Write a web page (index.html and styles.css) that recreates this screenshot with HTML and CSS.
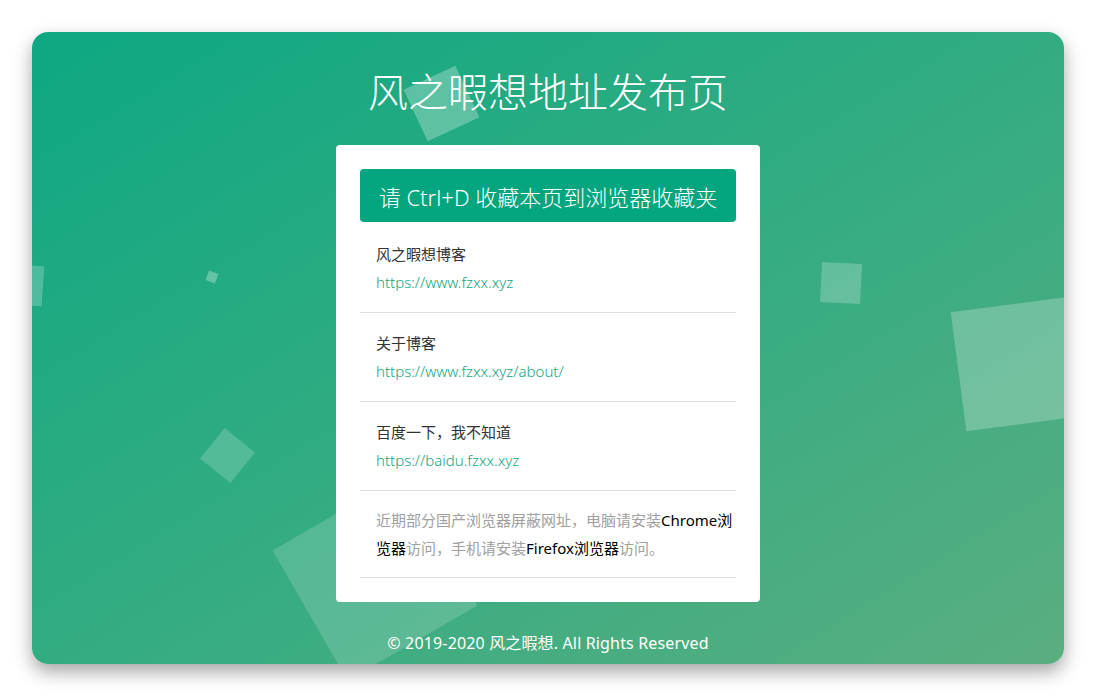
FILE: index.html
```html
<!DOCTYPE html>
<html lang="zh-CN">
<head>
<meta charset="utf-8">
<title>风之暇想地址发布页</title>
<link rel="stylesheet" href="styles.css">
</head>
<body>
<div class="panel">
  <div class="bubbles">
    <span class="sq sq-title"></span>
    <span class="sq sq-tiny"></span>
    <span class="sq sq-edge"></span>
    <span class="sq sq-mid"></span>
    <span class="sq sq-right"></span>
    <span class="sq sq-diamond"></span>
    <span class="sq sq-bottom"></span>
  </div>
  <div class="content">
    <h1 class="title">风之暇想地址发布页</h1>
    <div class="card">
      <div class="tip">请 Ctrl+D 收藏本页到浏览器收藏夹</div>
      <ul class="list">
        <li class="item">
          <div class="name">风之暇想博客</div>
          <a class="url" href="#">https://www.fzxx.xyz</a>
        </li>
        <li class="item">
          <div class="name">关于博客</div>
          <a class="url" href="#">https://www.fzxx.xyz/about/</a>
        </li>
        <li class="item">
          <div class="name">百度一下，我不知道</div>
          <a class="url" href="#">https://baidu.fzxx.xyz</a>
        </li>
        <li class="item note">
          <span class="line">近期部分国产浏览器屏蔽网址，电脑请安装<b>Chrome浏</b></span>
          <span class="line"><b>览器</b>访问，手机请安装<b>Firefox浏览器</b>访问。</span>
        </li>
      </ul>
    </div>
    <footer class="footer">© 2019-2020 风之暇想. All Rights Reserved</footer>
  </div>
</div>
</body>
</html>
```

FILE: styles.css
```css
html, body {
  margin: 0;
  padding: 0;
  background: #ffffff;
}

body {
  padding: 32px;
  font-family: "Noto Sans", "Noto Sans CJK SC", sans-serif;
}

.panel {
  position: relative;
  height: 632px;
  border-radius: 16px;
  overflow: hidden;
  background: linear-gradient(to bottom right, #0da882 0%, #33ac82 50%, #5aae80 100%);
  box-shadow: 0 8px 18px rgba(0, 0, 0, 0.35);
}

.bubbles {
  position: absolute;
  inset: 0;
  overflow: hidden;
}

.sq {
  position: absolute;
  display: block;
  background: rgba(255, 255, 255, 0.22);
}

.sq-title {
  left: 381px; top: 43px; width: 57px; height: 57px;
  transform: rotate(-25deg);
  background: rgba(255, 255, 255, 0.28);
}
.sq-tiny {
  left: 175px; top: 240px; width: 10px; height: 10px;
  transform: rotate(20deg);
  background: rgba(255, 255, 255, 0.3);
}
.sq-edge {
  left: -29px; top: 233px; width: 40px; height: 40px;
  transform: rotate(4deg);
}
.sq-mid {
  left: 789px; top: 231px; width: 40px; height: 40px;
  transform: rotate(3deg);
}
.sq-right {
  left: 926px; top: 272px; width: 120px; height: 120px;
  transform: rotate(-7.5deg);
  background: rgba(255, 255, 255, 0.24);
}
.sq-diamond {
  left: 176px; top: 404px; width: 39px; height: 39px;
  transform: rotate(39deg);
  background: rgba(255, 255, 255, 0.18);
}
.sq-bottom {
  left: 268px; top: 471px; width: 150px; height: 150px;
  transform: rotate(-30deg);
  background: rgba(255, 255, 255, 0.16);
}

.content {
  position: relative;
  display: flex;
  flex-direction: column;
  align-items: center;
  padding-top: 34px;
}

.title {
  margin: 0;
  font-family: "Noto Sans CJK SC", sans-serif;
  font-size: 40px;
  line-height: 48px;
  font-weight: 300;
  color: #ffffff;
}

.card {
  margin-top: 31px;
  width: 376px;
  padding: 24px;
  background: #ffffff;
  border-radius: 4px;
}

.tip {
  height: 53px;
  display: flex;
  align-items: center;
  justify-content: center;
  background: #04a67f;
  border-radius: 4px;
  color: #ffffff;
  font-family: "Noto Sans", "Noto Sans CJK SC", sans-serif;
  font-size: 22px;
  font-weight: 300;
}

.list {
  list-style: none;
  margin: 2px 0 0;
  padding: 0;
}

.item {
  display: flex;
  flex-direction: column;
  padding: 16px 0 16px 16px;
  border-bottom: 1px solid #dddddd;
  font-size: 15px;
  line-height: 28px;
}

.name {
  color: #333333;
  font-family: "Noto Sans CJK SC", sans-serif;
}

.url {
  color: #13a582;
  text-decoration: none;
  font-weight: 300;
}

.note {
  padding-top: 15px;
  padding-bottom: 15px;
  color: #a0a0a0;
  font-family: "Noto Sans CJK SC", sans-serif;
}

.note .line {
  display: block;
  white-space: nowrap;
}

.note b {
  font-weight: 400;
  color: #000000;
  font-family: "Noto Sans", "Noto Sans CJK SC", sans-serif;
}

.footer {
  margin-top: 29px;
  color: #ffffff;
  font-size: 16px;
  line-height: 24px;
  letter-spacing: 0.15px;
}
```
